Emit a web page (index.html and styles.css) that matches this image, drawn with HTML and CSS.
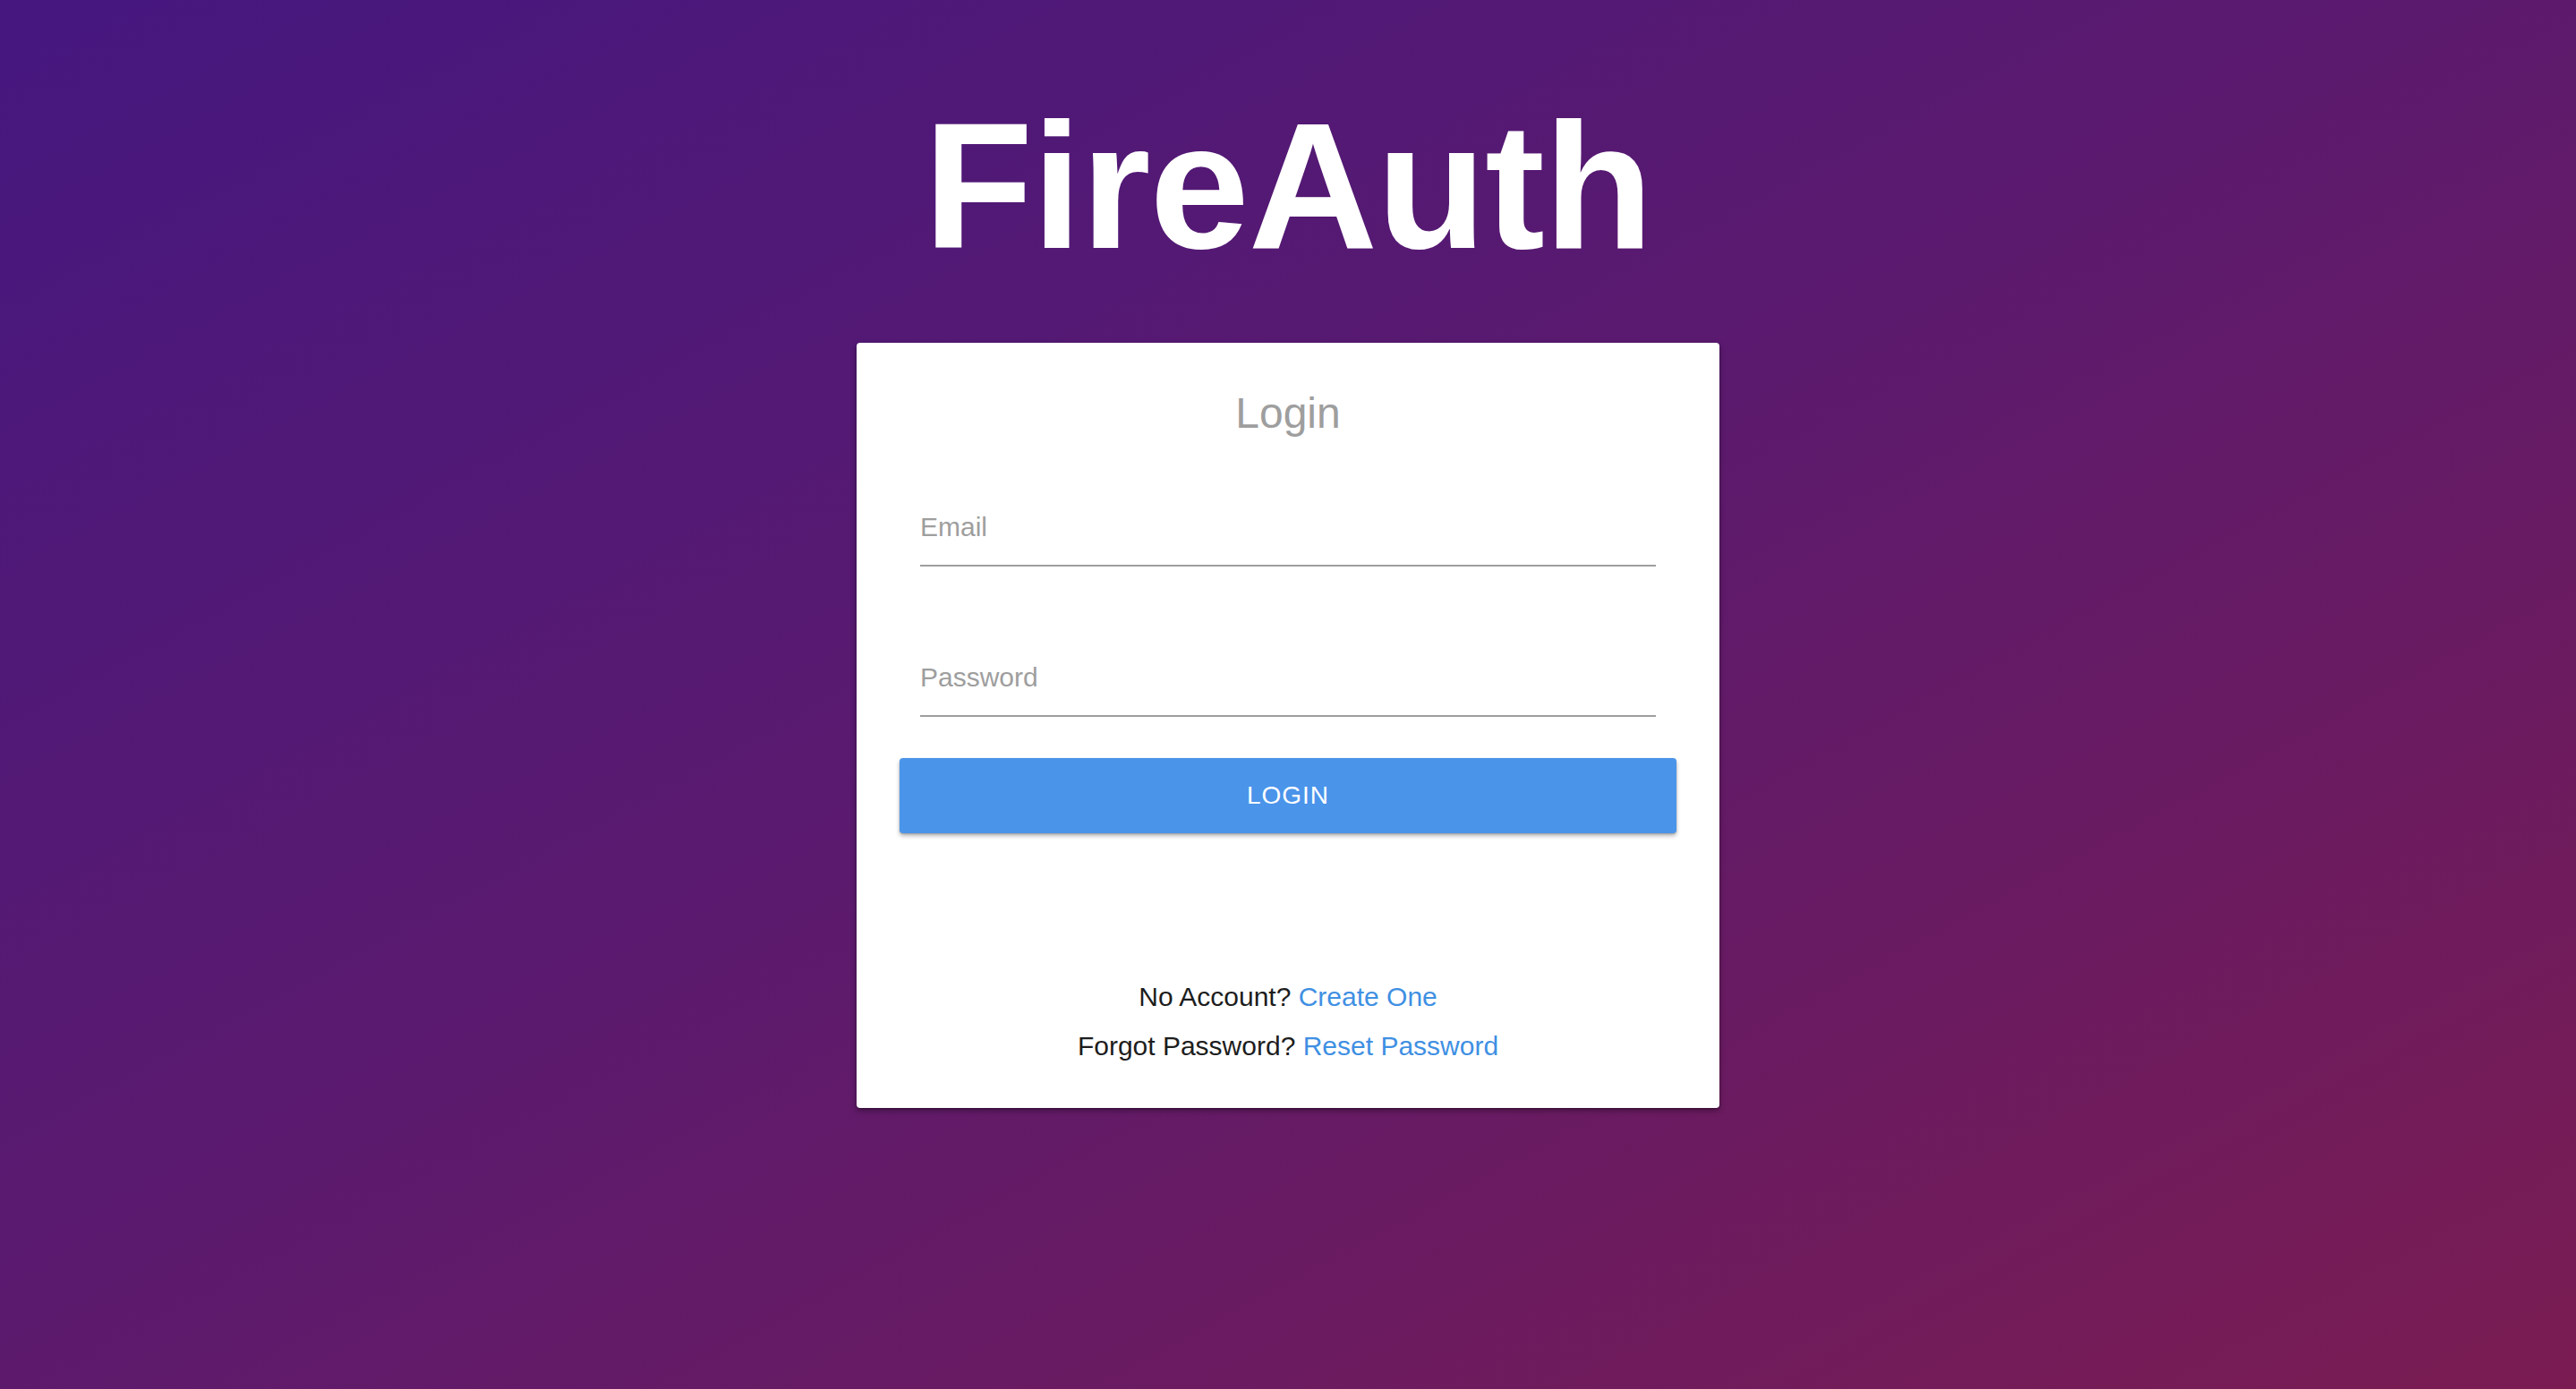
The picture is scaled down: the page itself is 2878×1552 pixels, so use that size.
FILE: index.html
```html
<!DOCTYPE html>
<html lang="en">
<head>
<meta charset="utf-8">
<title>FireAuth</title>
<link rel="stylesheet" href="styles.css">
</head>
<body>
  <main class="page">
    <h1 class="brand">FireAuth</h1>
    <section class="card">
      <h2 class="card-title">Login</h2>
      <form class="form">
        <label class="field field-email">
          <span class="field-label">Email</span>
        </label>
        <label class="field field-password">
          <span class="field-label">Password</span>
        </label>
        <button type="button" class="btn">LOGIN</button>
      </form>
      <div class="links">
        <p class="link-line">No Account? <a href="#" class="link">Create One</a></p>
        <p class="link-line">Forgot Password? <a href="#" class="link">Reset Password</a></p>
      </div>
    </section>
  </main>
</body>
</html>
```

FILE: styles.css
```css
html, body {
  margin: 0;
  padding: 0;
  height: 100%;
}

body {
  background: linear-gradient(to bottom right, #45177f 0%, #5a1a6f 45%, #7a1c52 100%);
  font-family: "Liberation Sans", Arial, Helvetica, sans-serif;
  min-height: 1552px;
}

.page {
  display: flex;
  flex-direction: column;
  align-items: center;
  padding-top: 108px;
}

.brand {
  margin: 0;
  font-size: 200px;
  line-height: 200px;
  font-weight: 700;
  color: #ffffff;
  letter-spacing: -1px;
}

.card {
  margin-top: 75px;
  width: 964px;
  box-sizing: border-box;
  background: #ffffff;
  border-radius: 4px;
  padding: 55px 48px 42px;
  box-shadow: 0 3px 6px rgba(0, 0, 0, 0.35), 0 1px 2px rgba(0, 0, 0, 0.25);
  display: flex;
  flex-direction: column;
}

.card-title {
  margin: 0;
  text-align: center;
  font-size: 48px;
  line-height: 48px;
  font-weight: 400;
  color: #9e9e9e;
}

.form {
  display: flex;
  flex-direction: column;
  margin-top: 88px;
}

.field {
  display: block;
  margin: 0 23px;
  padding-bottom: 27px;
  border-bottom: 2px solid #9e9e9e;
}

.field-password {
  margin-top: 109px;
}

.field-label {
  display: block;
  font-size: 30px;
  line-height: 30px;
  color: #9e9e9e;
}

.btn {
  margin-top: 46px;
  height: 84px;
  border: none;
  border-radius: 4px;
  background: #4a94ea;
  color: #ffffff;
  font-family: "Liberation Sans", Arial, Helvetica, sans-serif;
  font-size: 28px;
  line-height: 84px;
  letter-spacing: 1px;
  padding: 0;
  box-shadow: 0 3px 5px rgba(0, 0, 0, 0.28), 0 1px 2px rgba(0, 0, 0, 0.2);
}

.links {
  margin-top: 155px;
  text-align: center;
}

.link-line {
  margin: 0;
  font-size: 30px;
  line-height: 55px;
  color: #1d1d1d;
}

.link {
  color: #3f90e3;
  text-decoration: none;
}
```
